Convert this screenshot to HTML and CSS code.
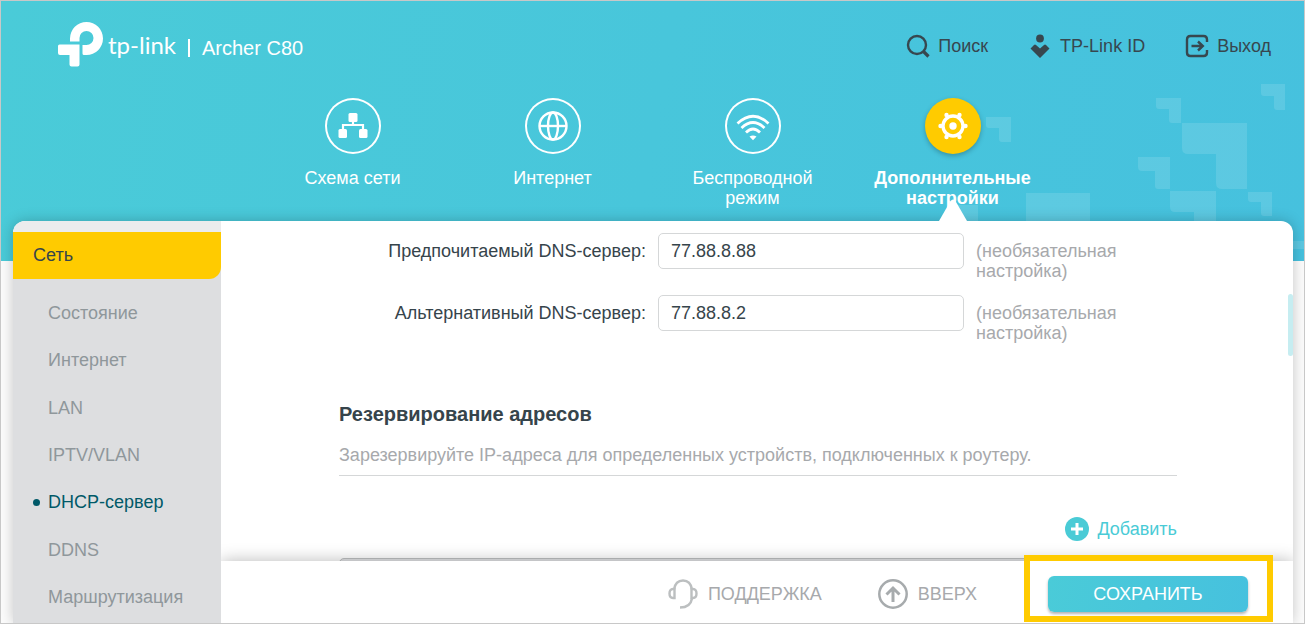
FILE: index.html
```html
<!DOCTYPE html>
<html lang="ru">
<head>
<meta charset="utf-8">
<title>Archer C80</title>
<link rel="stylesheet" href="styles.css">
</head>
<body>
<div class="app">
  <svg class="decor" viewBox="944 1 360 260" aria-hidden="true">
    <path d="M986 117h25v25h-9q-3 0-3-3v-11h-10q-3 0-3-3z"/>
    <path d="M1156 98h25v25h-9q-3 0-3-3v-11h-10q-3 0-3-3z"/>
    <path d="M1261 84h24v26h-8q-3 0-3-3v-11h-10q-3 0-3-3z"/>
    <path d="M1182 123h65v66h-25q-6 0-6-6v-29h-28q-6 0-6-6z"/>
    <path d="M1138 157h32v32h-12q-3 0-3-3v-15h-13q-4 0-4-4z"/>
    <path d="M1170 191h46v40h-22v-19h-19q-5 0-5-5z"/>
    <path d="M1248 192h24v24h-8q-3 0-3-3v-11h-10q-3 0-3-3z"/>
    <path d="M1026 193h64v30h-64zM955 205h23v18h-23zM1290 241h14v8h-14z"/>
  </svg>

  <header class="top">
    <div class="brand">
      <svg class="mark" viewBox="0 0 46 46" aria-hidden="true">
        <path fill="#fff" d="M12 20.500V17.500a16.500 16.500 0 1 1 16.500 16.500h-2.500q-1.500 0-1.500-1.500V24h4a7 7 0 1 0-7-7v3.500zM0 25q0-1.500 1.500-1.500H21.500V43.500q0 2-2 2H13.500q-2 0-2-2V34H2q-2 0-2-2z"/>
      </svg>
      <span class="wordmark">tp-link</span>
      <span class="bar"></span>
      <span class="model">Archer C80</span>
    </div>
    <div class="tools">
      <button class="tool" type="button">
        <svg viewBox="0 0 24 24" aria-hidden="true"><circle cx="11" cy="11" r="9" fill="none" stroke="#37474f" stroke-width="2.400"/><path d="M17.500 17.500l5 5" stroke="#37474f" stroke-width="3.200"/></svg>
        Поиск
      </button>
      <button class="tool" type="button">
        <svg viewBox="0 0 24 24" aria-hidden="true"><circle cx="12" cy="4.500" r="3.900" fill="#37474f"/><path fill="#37474f" d="M2.500 14.500L6 11q1-.8 2 0l4 3.500 4-3.500q1-.8 2 0l3.500 3.500L12 24z"/></svg>
        TP-Link ID
      </button>
      <button class="tool" type="button">
        <svg viewBox="0 0 24 24" aria-hidden="true" fill="none" stroke="#37474f" stroke-width="2.400"><path d="M22 8V5.500Q22 2 18.500 2h-13Q2 2 2 5.500v13Q2 22 5.500 22h13q3.500 0 3.500-3.500V16"/><path d="M6.500 12h11M13 7.500l4.800 4.500-4.800 4.500"/></svg>
        Выход
      </button>
    </div>
  </header>

  <nav class="tabs">
    <a class="tab" href="#map">
      <span class="disc"><svg viewBox="0 0 56 56" aria-hidden="true"><path fill="none" stroke="#fff" stroke-width="2.200" d="M18 33v-6h20v6M28 22v5"/><g fill="#fff"><rect x="23.500" y="15" width="9" height="9" rx="1.500"/><rect x="13.500" y="31" width="8.500" height="9" rx="1.500"/><rect x="34" y="31" width="8.500" height="9" rx="1.500"/></g></svg></span>
      <span>Схема сети</span>
    </a>
    <a class="tab" href="#internet">
      <span class="disc"><svg viewBox="0 0 56 56" aria-hidden="true" fill="none" stroke="#fff" stroke-width="2.400"><circle cx="28" cy="28" r="13.500"/><ellipse cx="28" cy="28" rx="5" ry="13.500"/><path d="M14.500 28h27" /></svg></span>
      <span>Интернет</span>
    </a>
    <a class="tab" href="#wireless">
      <span class="disc"><svg viewBox="0 0 56 56" aria-hidden="true" fill="none" stroke="#fff" stroke-width="2.800"><path d="M12.500 25.500q15.500-14.500 31 0M16.500 30q11.500-11 23 0M21 34.500q7-7 14 0"/><path fill="#fff" stroke="none" d="M24.500 38.500q3.500-2 7 0l-3.500 3.700z"/></svg></span>
      <span>Беспроводной режим</span>
    </a>
    <a class="tab active" href="#advanced" aria-current="page">
      <span class="disc"><svg viewBox="0 0 56 56" aria-hidden="true"><circle cx="28" cy="28" r="10" fill="none" stroke="#fff" stroke-width="3.400"/><g fill="#fff"><circle cx="28" cy="28" r="3.700"/><circle cx="21.500" cy="17" r="2.200"/><circle cx="34.500" cy="17" r="2.200"/><circle cx="21.500" cy="39" r="2.200"/><circle cx="34.500" cy="39" r="2.200"/><circle cx="15.500" cy="28" r="2.200"/><circle cx="40.500" cy="28" r="2.200"/></g></svg></span>
      <span>Дополнительные настройки</span>
      <svg class="pointer" viewBox="0 0 28 22" aria-hidden="true"><path fill="#fff" d="M0 22L11.500 2Q14-1 16.500 2L28 22z"/></svg>
    </a>
  </nav>

  <div class="panel">
    <aside class="side">
      <a class="group" href="#net">Сеть</a>
      <ul class="menu">
        <li><a href="#status">Состояние</a></li>
        <li><a href="#wan">Интернет</a></li>
        <li><a href="#lan">LAN</a></li>
        <li><a href="#iptv">IPTV/VLAN</a></li>
        <li><a class="current" href="#dhcp">DHCP-сервер</a></li>
        <li><a href="#ddns">DDNS</a></li>
        <li><a href="#routing">Маршрутизация</a></li>
      </ul>
    </aside>

    <main class="main">
      <div class="scroll">
        <div class="content">
          <div class="row">
            <label for="dns1">Предпочитаемый DNS-сервер:</label>
            <input id="dns1" type="text" value="77.88.8.88">
            <span class="hint">(необязательная настройка)</span>
          </div>
          <div class="row">
            <label for="dns2">Альтернативный DNS-сервер:</label>
            <input id="dns2" type="text" value="77.88.8.2">
            <span class="hint">(необязательная настройка)</span>
          </div>
          <h2>Резервирование адресов</h2>
          <p class="lead">Зарезервируйте IP-адреса для определенных устройств, подключенных к роутеру.</p>
          <button class="add" type="button">
            <svg viewBox="0 0 24 24" aria-hidden="true"><circle cx="12" cy="12" r="12" fill="#4acbd6"/><path d="M12 6v12M6 12h12" stroke="#fff" stroke-width="3"/></svg>
            Добавить
          </button>
          <div class="list"></div>
        </div>
        <span class="thumb"></span>
      </div>
      <footer class="actions">
        <button class="action" type="button">
          <svg viewBox="0 0 30 30" aria-hidden="true" fill="none" stroke="#bcbfc0" stroke-width="2.400"><path d="M6 10.500C7 4.500 10.500 1.500 15 1.500s8 3 9 9M24 19.500c-1 6-5 9-12 9"/><path d="M6.500 10v9H5q-3.500 0-3.500-4.500T5 10zM23.500 10v9H25q3.500 0 3.500-4.500T25 10z"/></svg>
          ПОДДЕРЖКА
        </button>
        <button class="action" type="button">
          <svg viewBox="0 0 30 30" aria-hidden="true" fill="none" stroke="#a7abad"><circle cx="15" cy="15" r="13.700" stroke-width="2.500"/><path stroke-width="3" d="M15 23V9.500M8.500 15.500L15 9l6.500 6.500"/></svg>
          ВВЕРХ
        </button>
        <div class="marked"><button class="save" type="button">СОХРАНИТЬ</button></div>
      </footer>
    </main>
  </div>
</div>
</body>
</html>
```
FILE: styles.css
```css
* { box-sizing: border-box; }

body {
  margin: 0;
  font: 18px/20px "Liberation Sans", Arial, sans-serif;
  color: #36444b;
}

button {
  font: inherit;
  border: 0;
  padding: 0;
  background: none;
  cursor: pointer;
}

a { color: inherit; text-decoration: none; }

.app {
  position: relative;
  display: flex;
  flex-direction: column;
  height: 100vh;
  overflow: hidden;
  border: 1px solid #c8c8c8;
  background: linear-gradient(100deg, #4acbd8, #46c1de) top / 100% 260px no-repeat #fcfcfc;
}

.decor {
  position: absolute;
  top: 0;
  right: 0;
  width: 360px;
  height: 260px;
  fill: rgba(255, 255, 255, .12);
}

.top {
  position: relative;
  display: flex;
  justify-content: space-between;
  align-items: center;
  padding: 20px 33px 0 57px;
}

.brand { display: flex; align-items: center; color: #fff; }
.mark { width: 46px; height: 46px; }
.wordmark { margin-left: 4px; padding-top: 2px; font: 24px/44px Lato, sans-serif; }
.bar { width: 2px; height: 18px; margin: 8px 12px 0; background: #fff; }
.model { padding-top: 8px; font-size: 20px; }

.tools { display: flex; gap: 40px; padding-top: 4px; }
.tool { display: flex; align-items: center; gap: 8px; color: #37474f; }
.tool svg { width: 24px; height: 24px; }

.tabs {
  position: relative;
  z-index: 1;
  display: grid;
  grid-template-columns: repeat(4, 200px);
  justify-content: center;
  padding: 31px 0 13px;
  color: #fff;
  text-align: center;
}

.tab {
  position: relative;
  display: flex;
  flex-direction: column;
  align-items: center;
  gap: 14px;
  padding: 0 24px;
  min-height: 110px;
}

.disc {
  width: 56px;
  height: 56px;
  border-radius: 50%;
  box-shadow: inset 0 0 0 2px #fff;
}
.disc svg { display: block; width: 56px; height: 56px; }

.active { font-weight: bold; }
.active .disc {
  background: #ffcb00;
  box-shadow: 0 2px 5px rgba(0, 0, 0, .25);
}

.pointer {
  position: absolute;
  bottom: -13px;
  left: 86px;
  width: 28px;
  height: 22px;
}

.panel {
  position: relative;
  flex: 1;
  display: flex;
  min-height: 0;
  margin: 0 11px 0 12px;
  border-radius: 12px 12px 0 0;
  background: #fff;
  box-shadow: 0 0 14px rgba(0, 0, 0, .22);
}

.side {
  width: 208px;
  padding-top: 11px;
  overflow: hidden;
  border-top-left-radius: 12px;
  background: linear-gradient(#ebeced 11px, #dddee0 11px);
}

.group {
  display: block;
  padding: 0 20px;
  line-height: 47px;
  border-bottom-right-radius: 12px;
  background: #ffcb00;
}

.menu {
  display: grid;
  grid-auto-rows: 1fr;
  align-items: center;
  height: 332px;
  margin: 10px 0 0;
  padding: 0 0 0 35px;
  list-style: none;
  color: #8f979b;
}

.current { position: relative; color: #005968; }
.current::before {
  content: "";
  position: absolute;
  top: 7px;
  left: -15px;
  width: 7px;
  height: 7px;
  border-radius: 50%;
  background: #005968;
}

.main {
  flex: 1;
  display: flex;
  flex-direction: column;
  min-width: 0;
}

.scroll {
  position: relative;
  flex: 1;
  min-height: 0;
  padding-left: 2px;
  overflow: hidden;
}

.content {
  display: flex;
  flex-direction: column;
  max-width: 838px;
  margin: 0 auto;
  padding-top: 12px;
}

.row {
  display: grid;
  grid-template-columns: 307px 306px 1fr;
  gap: 12px;
  align-items: start;
  height: 36px;
  margin-bottom: 26px;
}
.row label { padding-top: 8px; text-align: right; }
.row input {
  height: 36px;
  padding: 0 12px;
  font: inherit;
  color: #36444b;
  border: 1px solid #d5d7d8;
  border-radius: 5px;
  background: #fff;
}
.hint { padding-top: 8px; color: #a7a9ac; }

h2 { margin: 45px 0 0; font-size: 20px; line-height: 24px; }

.lead {
  margin: 19px 0 0;
  padding-bottom: 10px;
  border-bottom: 1px solid #d5d7d8;
  color: #a7a9ac;
}

.add {
  align-self: flex-end;
  display: flex;
  align-items: center;
  gap: 8px;
  margin-top: 41px;
  color: #4acbd6;
}
.add svg { width: 24px; height: 24px; }

.list {
  height: 48px;
  margin-top: 17px;
  border: 1px solid #bfc1c2;
  border-radius: 5px 5px 0 0;
  background: #e3e4e6;
}

.thumb {
  position: absolute;
  top: 73px;
  right: 0;
  width: 5px;
  height: 62px;
  border-radius: 3px;
  background: #c6edf1;
}

.actions {
  position: relative;
  display: flex;
  justify-content: flex-end;
  align-items: center;
  gap: 56px;
  height: 62px;
  padding: 4px 45px 0 0;
  background: #fff;
  box-shadow: 0 0 16px rgba(0, 0, 0, .28);
  clip-path: inset(-20px 0 0 0);
}

.action { display: flex; align-items: center; gap: 10px; color: #a7a9ac; }
.action svg { width: 30px; height: 30px; }

.marked { position: relative; margin-left: 15px; }
.marked::after {
  content: "";
  position: absolute;
  inset: -21px -25px -10px -24px;
  border: 6px solid #ffcb00;
  pointer-events: none;
}

.save {
  display: block;
  width: 200px;
  height: 36px;
  color: #fff;
  border-radius: 6px;
  background: linear-gradient(100deg, #4acbd8, #46c1de);
  box-shadow: 0 2px 3px rgba(0, 0, 0, .3);
}
```
